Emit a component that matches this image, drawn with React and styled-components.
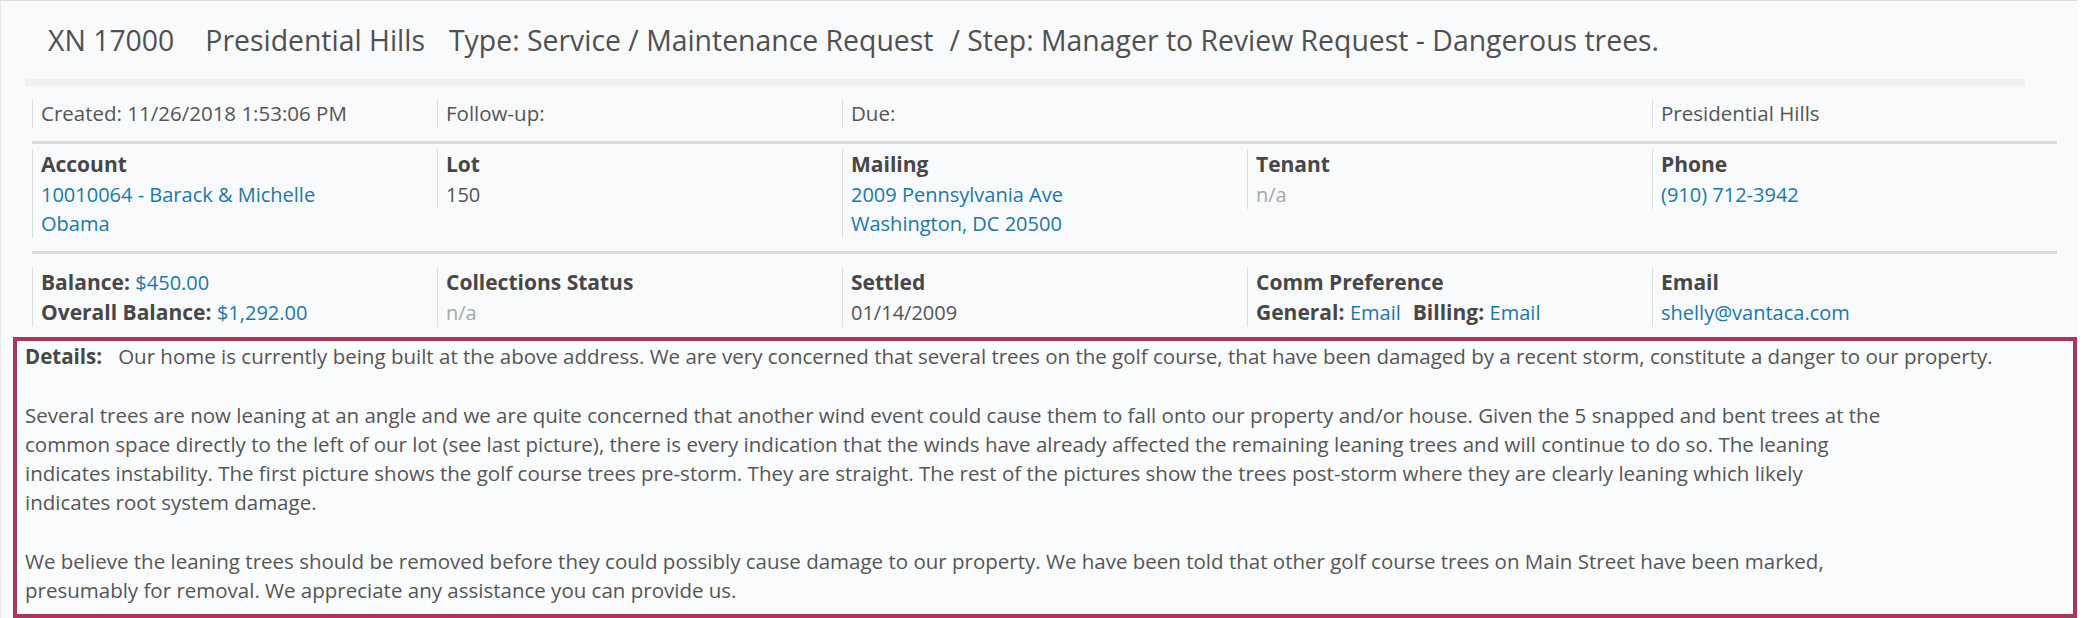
import React from 'react'
import styled, { createGlobalStyle } from 'styled-components'

const GlobalStyle = createGlobalStyle`
  html, body {
    margin: 0;
    padding: 0;
    background: #ffffff;
  }
  body {
    font-family: "Open Sans", "Noto Sans", "Liberation Sans", sans-serif;
    color: #555;
  }
`

const ticket = {
  number: 'XN 17000',
  community: 'Presidential Hills',
  type: 'Service / Maintenance Request',
  step: 'Manager to Review Request - Dangerous trees.',
  created: '11/26/2018 1:53:06 PM',
}

const details = [
  ['Our home is currently being built at the above address. We are very concerned that several trees on the golf course, that have been damaged by a recent storm, constitute a danger to our property.'],
  [
    'Several trees are now leaning at an angle and we are quite concerned that another wind event could cause them to fall onto our property and/or house. Given the 5 snapped and bent trees at the',
    'common space directly to the left of our lot (see last picture), there is every indication that the winds have already affected the remaining leaning trees and will continue to do so. The leaning',
    'indicates instability. The first picture shows the golf course trees pre-storm. They are straight. The rest of the pictures show the trees post-storm where they are clearly leaning which likely',
    'indicates root system damage.',
  ],
  [
    'We believe the leaning trees should be removed before they could possibly cause damage to our property. We have been told that other golf course trees on Main Street have been marked,',
    'presumably for removal. We appreciate any assistance you can provide us.',
  ],
]

function Field({ label, children, span }) {
  return (
    <Cell span={span}>
      <Label head>{label}</Label>
      {children}
    </Cell>
  )
}

export default function App() {
  return (
    <>
      <GlobalStyle />
      <Panel>
        <Title>
          <Part gap={31}>{ticket.number}</Part>
          <Part gap={24}>{ticket.community}</Part>
          <Part gap={16}>Type: {ticket.type}</Part>
          <Part>/ Step: {ticket.step}</Part>
        </Title>
        <Bar />
        <Grid>
          <MetaRow>
            <Cell>Created: {ticket.created}</Cell>
            <Cell>Follow-up:</Cell>
            <Cell span={2}>Due:</Cell>
            <Cell>{ticket.community}</Cell>
          </MetaRow>
          <InfoRow top={5}>
            <Field label="Account">
              <Link>10010064 - Barack &amp; Michelle<br />Obama</Link>
            </Field>
            <Field label="Lot">
              <Value>150</Value>
            </Field>
            <Field label="Mailing">
              <Link>2009 Pennsylvania Ave<br />Washington, DC 20500</Link>
            </Field>
            <Field label="Tenant">
              <Value muted>n/a</Value>
            </Field>
            <Field label="Phone">
              <Link>(910) 712-3942</Link>
            </Field>
          </InfoRow>
          <InfoRow top={13} last>
            <Cell>
              <Label head>Balance: <Link>$450.00</Link></Label>
              <Label>Overall Balance: <Link>$1,292.00</Link></Label>
            </Cell>
            <Field label="Collections Status">
              <Value muted>n/a</Value>
            </Field>
            <Field label="Settled">
              <Value>01/14/2009</Value>
            </Field>
            <Field label="Comm Preference">
              <Label>
                General: <Link>Email</Link>
                <Spacer />
                Billing: <Link>Email</Link>
              </Label>
            </Field>
            <Field label="Email">
              <Link>shelly@vantaca.com</Link>
            </Field>
          </InfoRow>
        </Grid>
        <DetailsBox>
          {details.map((para, i) => (
            <Para key={i}>
              {i === 0 && <DetailsLabel>Details:</DetailsLabel>}
              {para.map((line, j) => (
                <React.Fragment key={j}>
                  {j > 0 && <br />}
                  {line}
                </React.Fragment>
              ))}
            </Para>
          ))}
        </DetailsBox>
      </Panel>
    </>
  )
}

const Panel = styled.div`
  width: 2077px;
  min-height: 617px;
  box-sizing: border-box;
  background: #f9fafc;
  border-top: 1px solid #dcdcdc;
  border-left: 1px solid #e6e7ea;
  padding-left: 12px;
`

const Title = styled.h1`
  margin: 22px 0 0 35px;
  font-size: 28.4px;
  line-height: 34px;
  font-weight: 400;
  color: #505050;
  white-space: nowrap;
`

const Part = styled.span`
  margin-right: ${p => p.gap || 0}px;
`

const Bar = styled.div`
  margin: 22px 0 0 12px;
  width: 2000px;
  height: 7px;
  background: #f0f0f0;
`

const Grid = styled.div`
  margin-left: 19px;
  width: 2025px;
  font-size: 20px;
  line-height: 29px;
`

const Row = styled.div`
  display: grid;
  grid-template-columns: repeat(5, 1fr);
  align-items: start;
`

const MetaRow = styled(Row)`
  padding: 13px 0 13px;
  border-bottom: 3px solid #d9d9d9;
  color: #555;
  font-size: 20.5px;
`

const InfoRow = styled(Row)`
  padding: ${p => p.top}px 0 ${p => (p.last ? 10 : 13)}px;
  border-bottom: ${p => (p.last ? 'none' : '3px solid #d9d9d9')};
`

const Cell = styled.div`
  grid-column: span ${p => p.span || 1};
  border-left: 1px solid #dedede;
  padding-left: 8px;
`

const Label = styled.div`
  font-size: 21px;
  font-weight: 700;
  color: #474747;
  line-height: ${p => (p.head ? 31 : 29)}px;
`

const Value = styled.div`
  color: ${p => (p.muted ? '#a6a6a6' : '#555')};
`

const Link = styled.span`
  font-size: 20px;
  font-weight: 400;
  color: #1b78a6;
`

const Spacer = styled.span`
  display: inline-block;
  width: 12px;
`

const DetailsBox = styled.div`
  box-sizing: border-box;
  height: 281px;
  border: 4px solid #a9395b;
  background: #fbfcfd;
  padding: 1px 8px 0 8px;
  font-size: 20.5px;
  line-height: 29.3px;
  color: #555;
`

const Para = styled.p`
  margin: 0 0 29.3px;
  white-space: nowrap;
`

const DetailsLabel = styled.span`
  font-weight: 700;
  color: #474747;
  margin-right: 16px;
`
